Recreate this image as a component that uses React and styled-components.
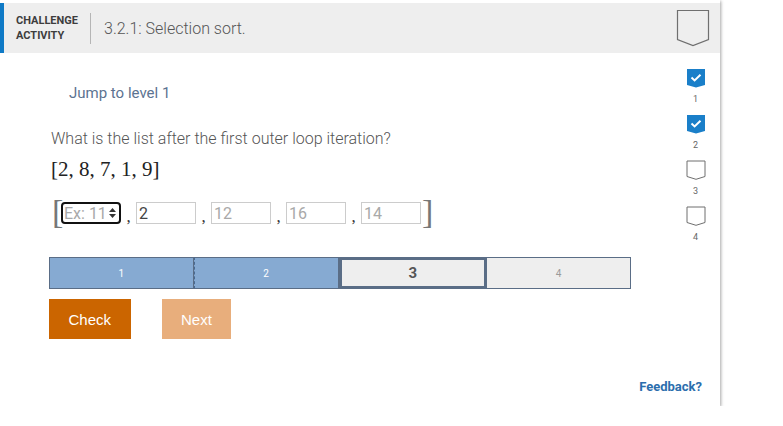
import React from 'react';
import styled, { createGlobalStyle } from 'styled-components';

const GlobalStyle = createGlobalStyle`
  body {
    margin: 0;
    background: #ffffff;
    font-family: Roboto, 'Liberation Sans', sans-serif;
  }
`;

const Card = styled.div`
  width: 720px;
  height: 406px;
  background: #ffffff;
  box-shadow: 1px 1px 3px rgba(0, 0, 0, 0.35);
  display: flex;
  flex-direction: column;
`;

const Header = styled.div`
  margin-top: 3px;
  height: 50px;
  background: #eeeeee;
  display: flex;
  align-items: center;
  border-left: 4px solid #0f7ac6;
`;

const Kind = styled.div`
  width: 74px;
  padding-left: 12px;
  font-size: 11px;
  font-weight: 700;
  line-height: 15px;
  color: #3d3d3d;
`;

const Divider = styled.div`
  width: 1px;
  height: 31px;
  background: #b5b5b5;
`;

const Title = styled.div`
  flex: 1;
  padding-left: 13px;
  font-size: 16px;
  font-weight: 300;
  color: #555;
`;

const HeaderBadge = styled.div`
  width: 50px;
  display: flex;
  justify-content: center;
  padding-right: 2px;
  svg {
    display: block;
  }
`;

const Body = styled.div`
  flex: 1;
  display: flex;
`;

const Main = styled.div`
  flex: 1;
  padding-left: 49px;
  display: flex;
  flex-direction: column;
`;

const JumpLink = styled.div`
  margin-top: 31px;
  margin-left: 20px;
  font-size: 15px;
  color: #5c7391;
  line-height: 18px;
`;

const Question = styled.div`
  margin-top: 27px;
  margin-left: 2px;
  font-size: 16px;
  font-weight: 300;
  color: #555;
  line-height: 20px;
`;

const MathList = styled.div`
  margin-top: 7px;
  margin-left: 2px;
  font-family: 'Liberation Serif', 'DejaVu Serif', serif;
  font-size: 21px;
  color: #222;
  line-height: 26px;
`;

const AnswerRow = styled.div`
  margin-top: 14px;
  margin-left: 3px;
  height: 34px;
  display: flex;
  align-items: center;
`;

const Bracket = styled.span`
  display: inline-block;
  width: ${(p) => (p.close ? 'auto' : '9px')};
  font-family: 'Liberation Serif', serif;
  font-size: 34px;
  font-weight: 300;
  color: #777;
  line-height: 34px;
  margin: ${(p) => (p.close ? '-3px 0 0 1px' : '-3px 0 0 0')};
`;

const Comma = styled.span`
  font-family: 'Liberation Serif', serif;
  font-size: 17px;
  color: #333;
  width: 15px;
  text-align: center;
  margin-top: 8px;
`;

const Field = styled.input`
  box-sizing: border-box;
  width: 60px;
  height: 22px;
  border: 1px solid #cccccc;
  padding: 0 2px;
  font-family: Roboto, 'Liberation Sans', sans-serif;
  font-size: 16px;
  color: #444;
  outline: none;
  &::placeholder {
    color: #a9a9a9;
  }
`;

const FocusedField = styled.div`
  box-sizing: border-box;
  width: 60px;
  height: 22px;
  border: 2px solid #111;
  border-radius: 4px;
  display: flex;
  align-items: center;
  padding-right: 2px;
  svg {
    display: block;
  }
`;

const BareInput = styled.input`
  width: 40px;
  flex: 1;
  border: none;
  outline: none;
  padding: 0 1px;
  font-family: Roboto, 'Liberation Sans', sans-serif;
  font-size: 16px;
  background: transparent;
  &::placeholder {
    color: #a9a9a9;
  }
`;

const Progress = styled.div`
  margin-top: 27px;
  width: 582px;
  height: 32px;
  display: flex;
`;

const Segment = styled.div`
  box-sizing: border-box;
  flex: 1;
  display: flex;
  align-items: center;
  justify-content: center;
  background: ${(p) => (p.done ? '#86aad2' : '#eeeeee')};
  border: ${(p) => (p.current ? '3px' : '1px')} solid #5a6d86;
  border-left: ${(p) => (p.dashed ? '1px dashed #4a6a90' : '')};
  border-left-width: ${(p) => (p.noLeft ? '0' : '')};
  color: ${(p) => (p.done ? '#ffffff' : p.current ? '#555' : '#9a9a9a')};
  font-size: ${(p) => (p.current ? '15px' : '10px')};
  font-weight: ${(p) => (p.current ? 700 : 400)};
`;

const Buttons = styled.div`
  margin-top: 10px;
  display: flex;
  gap: 31px;
`;

const Button = styled.button`
  height: 40px;
  padding: 0 19.5px;
  border: none;
  font-family: 'Liberation Sans', Arial, sans-serif;
  font-size: 15px;
  color: #ffffff;
  background: ${(p) => (p.disabled ? '#e8ae7c' : '#cb6500')};
`;

const Footer = styled.div`
  margin-top: auto;
  margin-bottom: 12px;
  display: flex;
  justify-content: flex-end;
  margin-right: -32px;
`;

const Feedback = styled.div`
  font-size: 13px;
  font-weight: 700;
  color: #2b6ead;
`;

const Side = styled.div`
  width: 50px;
  padding-top: 15px;
  display: flex;
  flex-direction: column;
  align-items: center;
`;

const Level = styled.div`
  height: 46px;
  display: flex;
  flex-direction: column;
  align-items: center;
  padding-left: 1px;
  svg {
    display: block;
  }
`;

const LevelNum = styled.div`
  margin-top: 6px;
  font-size: 9px;
  color: #666;
  line-height: 11px;
`;

function Shield({ done, big }) {
  if (big) {
    return (
      <svg width="34" height="38" viewBox="0 0 34 38">
        <path d="M1.5 1.5 H32.5 V30.5 L17 36.5 L1.5 30.5 Z" fill="none" stroke="#6f6f6f" strokeWidth="1.2" />
      </svg>
    );
  }
  return (
    <svg width="20" height="20" viewBox="0 0 20 20">
      {done ? (
        <>
          <path d="M1 1 H19 V17 L10 19.5 L1 17 Z" fill="#1a7fc9" />
          <path d="M5.5 9.5 L8.6 12.4 L14.5 6.8" fill="none" stroke="#ffffff" strokeWidth="2" />
        </>
      ) : (
        <path d="M1 1 H19 V16.5 L10 19.3 L1 16.5 Z" fill="none" stroke="#6f6f6f" strokeWidth="1" />
      )}
    </svg>
  );
}

function Spinner() {
  return (
    <svg width="9" height="14" viewBox="0 0 9 14">
      <path d="M1 6 L4.5 2 L8 6 Z" fill="#333" />
      <path d="M1 8 L4.5 12 L8 8 Z" fill="#333" />
    </svg>
  );
}

export default function App() {
  const levels = [1, 2, 3, 4];
  const others = [
    { value: '2' },
    { placeholder: '12' },
    { placeholder: '16' },
    { placeholder: '14' },
  ];
  return (
    <Card>
      <GlobalStyle />
      <Header>
        <Kind>
          CHALLENGE
          <br />
          ACTIVITY
        </Kind>
        <Divider />
        <Title>3.2.1: Selection sort.</Title>
        <HeaderBadge>
          <Shield big />
        </HeaderBadge>
      </Header>
      <Body>
        <Main>
          <JumpLink>Jump to level 1</JumpLink>
          <Question>What is the list after the first outer loop iteration?</Question>
          <MathList>[2, 8, 7, 1, 9]</MathList>
          <AnswerRow>
            <Bracket>[</Bracket>
            <FocusedField>
              <BareInput placeholder="Ex: 11" />
              <Spinner />
            </FocusedField>
            {others.map((o, i) => (
              <React.Fragment key={i}>
                <Comma>,</Comma>
                <Field defaultValue={o.value} placeholder={o.placeholder} />
              </React.Fragment>
            ))}
            <Bracket close>]</Bracket>
          </AnswerRow>
          <Progress>
            <Segment done>1</Segment>
            <Segment done dashed>2</Segment>
            <Segment current>3</Segment>
            <Segment noLeft>4</Segment>
          </Progress>
          <Buttons>
            <Button>Check</Button>
            <Button disabled>Next</Button>
          </Buttons>
          <Footer>
            <Feedback>Feedback?</Feedback>
          </Footer>
        </Main>
        <Side>
          {levels.map((n) => (
            <Level key={n}>
              <Shield done={n < 3} />
              <LevelNum>{n}</LevelNum>
            </Level>
          ))}
        </Side>
      </Body>
    </Card>
  );
}
